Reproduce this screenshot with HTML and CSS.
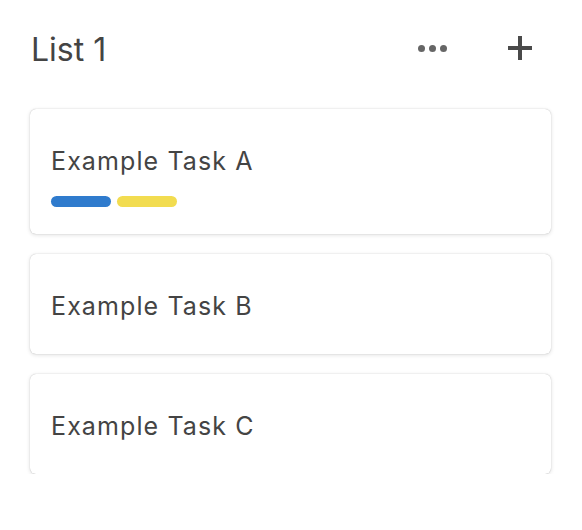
FILE: index.html
```html
<!DOCTYPE html>
<html lang="en">
<head>
<meta charset="utf-8">
<title>List 1</title>
<link rel="stylesheet" href="styles.css">
</head>
<body>
<div class="list">
  <div class="list-header">
    <h2 class="list-title">List 1</h2>
    <div class="list-actions">
      <button class="icon-btn" aria-label="More">
        <svg width="29" height="7" viewBox="0 0 29 7"><circle cx="3.5" cy="3.5" r="3.5"/><circle cx="14.5" cy="3.5" r="3.5"/><circle cx="25.5" cy="3.5" r="3.5"/></svg>
      </button>
      <button class="icon-btn plus" aria-label="Add">
        <svg width="24" height="24" viewBox="0 0 24 24"><rect x="10" y="0" width="4" height="24"/><rect x="0" y="10" width="24" height="4"/></svg>
      </button>
    </div>
  </div>
  <div class="cards">
    <div class="card">
      <div class="task-title">Example Task A</div>
      <div class="tags">
        <span class="tag blue"></span>
        <span class="tag yellow"></span>
      </div>
    </div>
    <div class="card">
      <div class="task-title">Example Task B</div>
    </div>
    <div class="card">
      <div class="task-title">Example Task C</div>
    </div>
  </div>
</div>
</body>
</html>
```
FILE: styles.css
```css
html, body {
  margin: 0;
  padding: 0;
  background: #ffffff;
}
body {
  font-family: Inter, "Noto Sans", "Liberation Sans", sans-serif;
  color: #444444;
}
.list {
  padding: 30px 31px 0 30px;
}
.list-header {
  display: flex;
  align-items: flex-start;
  height: 40px;
  padding-right: 11px;
}
.list-title {
  flex: 1;
  margin: 0 0 0 1px;
  font-size: 32px;
  font-weight: 400;
  line-height: 40px;
  color: #444444;
}
.list-actions {
  display: flex;
  gap: 48px;
}
.icon-btn {
  width: 40px;
  height: 36px;
  padding: 0;
  border: 0;
  background: none;
  display: flex;
  align-items: center;
  justify-content: center;
  cursor: pointer;
}
.icon-btn svg {
  fill: #666666;
  display: block;
}
.icon-btn.plus svg {
  fill: #4a4a4a;
}
.cards {
  margin-top: 39px;
  display: flex;
  flex-direction: column;
  gap: 20px;
}
.card {
  background: #fff;
  border-radius: 6px;
  box-shadow: 0 0 1px rgba(0, 0, 0, 0.3), 0 1px 4px rgba(0, 0, 0, 0.13);
  padding: 37px 21px 27px;
}
.task-title {
  font-size: 25px;
  letter-spacing: 1.1px;
  line-height: 30px;
  margin-bottom: 6px;
}
.tags {
  display: flex;
  gap: 6px;
  margin-top: 20px;
}
.tag {
  width: 60px;
  height: 11px;
  border-radius: 6px;
}
.tag.blue {
  background: #2f7bcd;
}
.tag.yellow {
  background: #f2dc50;
}
```
